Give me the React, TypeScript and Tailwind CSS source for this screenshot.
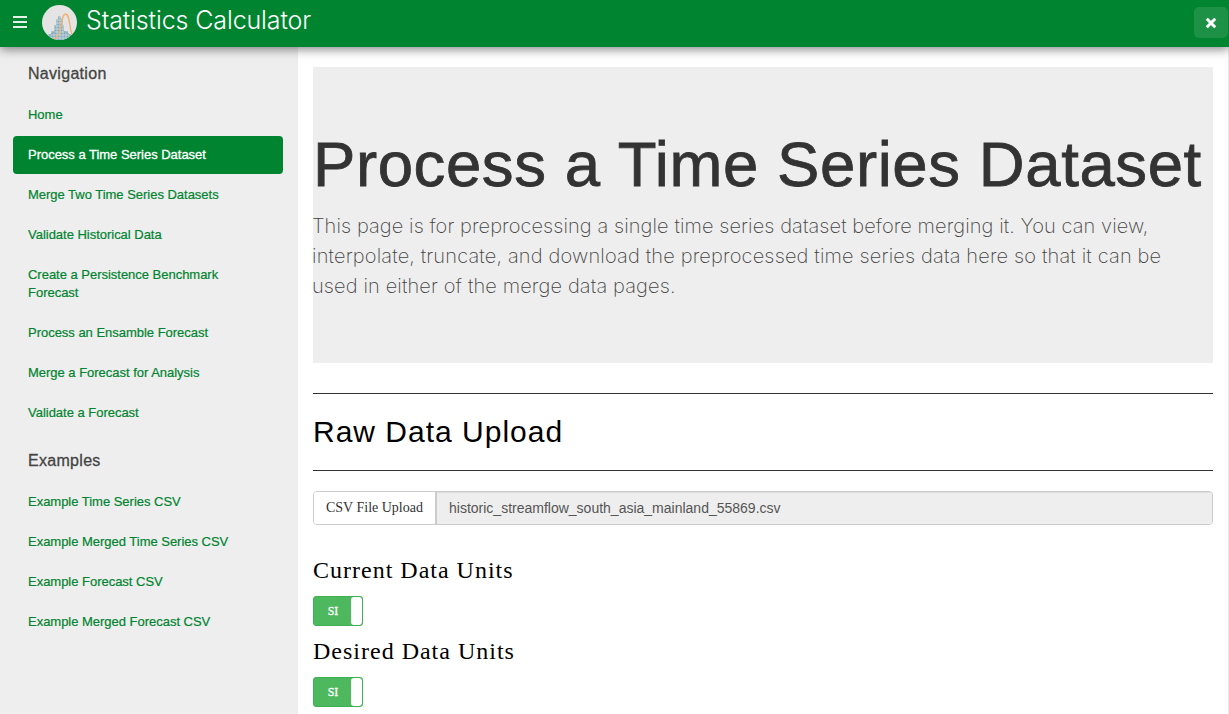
import React from "react";

type NavEntry = { label: string; active?: boolean };

const navigation: NavEntry[] = [
  { label: "Home" },
  { label: "Process a Time Series Dataset", active: true },
  { label: "Merge Two Time Series Datasets" },
  { label: "Validate Historical Data" },
  { label: "Create a Persistence Benchmark Forecast" },
  { label: "Process an Ensamble Forecast" },
  { label: "Merge a Forecast for Analysis" },
  { label: "Validate a Forecast" },
];

const examples: NavEntry[] = [
  { label: "Example Time Series CSV" },
  { label: "Example Merged Time Series CSV" },
  { label: "Example Forecast CSV" },
  { label: "Example Merged Forecast CSV" },
];

function Logo() {
  return (
    <svg viewBox="0 0 35 35" className="ml-[14px] mt-[5px] size-[35px] shrink-0">
      <defs>
        <clipPath id="disc">
          <circle cx="17.5" cy="17.5" r="17.5" />
        </clipPath>
        <pattern id="dots" width="3" height="3" patternUnits="userSpaceOnUse">
          <rect width="3" height="3" fill="#bccfd7" />
          <circle cx="1.5" cy="1.5" r="1.1" fill="#7faabd" />
        </pattern>
      </defs>
      <g clipPath="url(#disc)">
        <rect width="35" height="35" fill="#e3e4e3" />
        <path d="M6 35V29H9V26H12V20H14V14H16V11H19V14H21V20H22V26H26V29H29V35Z" fill="url(#dots)" />
        <path d="M5 33C9 30 10 27 13 27M22 27C26 27 28 31 31 33" fill="none" stroke="#7fa6b8" strokeWidth="1" />
        <path d="M10 34.500C21 34 18 9 23.500 9C28.500 9 27 25 30.500 30" fill="none" stroke="#f5b06c" strokeWidth="1.300" />
      </g>
    </svg>
  );
}

function NavGroup({ title, items }: { title: string; items: NavEntry[] }) {
  return (
    <section>
      <h2 className="mb-[2px] flex h-10 items-center px-[15px] text-[16px] tracking-[0.300px] text-[#444] [-webkit-text-stroke:0.3px_#444]">{title}</h2>
      <ul className="flex flex-col gap-[2px]">
        {items.map((item) => (
          <li key={item.label}>
            <a
              className={`block rounded-[4px] px-[15px] py-[10px] text-[13px] leading-[18px] tracking-[-0.020px] ${
                item.active
                  ? "bg-[#00842f] text-white [-webkit-text-stroke:0.3px_#fff]"
                  : "text-[#00842f] [-webkit-text-stroke:0.2px_#00842f]"
              }`}
            >
              {item.label}
            </a>
          </li>
        ))}
      </ul>
    </section>
  );
}

function UnitToggle() {
  return (
    <div className="flex h-[30px] w-[50px] overflow-hidden rounded-[3px] border border-[#3eaf52] bg-[#4eb85f]">
      <span className="flex-1 pl-[1px] text-center font-['Liberation_Serif',serif] text-[12px] leading-[28px] text-white [-webkit-text-stroke:0.3px_#fff]">SI</span>
      <span className="w-[11px] rounded-[3px] bg-white" />
    </div>
  );
}

export default function App() {
  return (
    <div className="flex h-[714px] w-full flex-col overflow-hidden bg-white font-['Liberation_Sans',Arial,sans-serif]">
      <header className="relative z-10 flex h-[47px] shrink-0 bg-[#00842f] shadow-[0_2px_10px_rgba(0,0,0,0.5)]">
        <button className="ml-[13px] mt-[16px] flex h-[12px] w-[15px] flex-col justify-between" aria-label="Menu">
          <span className="h-[2px] w-[14px] bg-[#e6f3ea]" />
          <span className="h-[2px] w-[14px] bg-[#e6f3ea]" />
          <span className="h-[2px] w-[14px] bg-[#e6f3ea]" />
        </button>
        <Logo />
        <h1 className="ml-[9px] whitespace-nowrap font-['Inter',sans-serif] text-[25px] font-light leading-[41px] tracking-[-0.120px] text-white">Statistics Calculator</h1>
        <button className="ml-auto mr-[1px] mt-[7px] flex h-[31px] w-[34px] items-center justify-center rounded-[5px] bg-[#1d9146]" aria-label="Close">
          <svg viewBox="0 0 10 10" className="size-[12px]">
            <path d="M1.500 1.500L8.500 8.500M8.500 1.500L1.500 8.500" stroke="#fff" strokeWidth="2.500" />
          </svg>
        </button>
      </header>
      <div className="flex min-h-0 flex-1">
        <nav className="flex w-[298px] shrink-0 flex-col gap-[9px] bg-[#eee] pl-[13px] pr-[15px] pt-[7px]">
          <NavGroup title="Navigation" items={navigation} />
          <NavGroup title="Examples" items={examples} />
        </nav>
        <main className="min-w-0 flex-1 border-r border-[#e7e7e7] pl-[15px] pr-[15px] pt-5">
          <section className="h-[296px] bg-[#eee] pt-[63px]">
            <h2 className="h-[69px] whitespace-nowrap text-[63.500px] leading-[69px] tracking-[0.590px] text-[#333] [-webkit-text-stroke:0.8px_#333]">Process a Time Series Dataset</h2>
            <p className="-ml-px mt-[12px] whitespace-nowrap font-['Inter',sans-serif] text-[20px] font-extralight leading-[30px] text-[#444]">
              <span className="tracking-[0.085px]">This page is for preprocessing a single time series dataset before merging it. You can view,</span>
              <br />
              <span className="tracking-[0.165px]">interpolate, truncate, and download the preprocessed time series data here so that it can be</span>
              <br />
              <span className="tracking-[0.135px]">used in either of the merge data pages.</span>
            </p>
          </section>
          <div className="mt-[30px] flex h-[78px] items-center border-y border-[#333] pb-[2px]">
            <h2 className="text-[30px] tracking-[1px] text-black">Raw Data Upload</h2>
          </div>
          <div className="mt-5 flex h-[34px] overflow-hidden rounded-[4px] border border-[#ccc]">
            <button className="w-[121px] shrink-0 bg-white pb-[2px] font-['Liberation_Serif',serif] text-[14px] text-[#333]">CSV File Upload</button>
            <div className="flex flex-1 items-center border-l-2 border-[#ccc] bg-[#eee] pl-[12px] text-[14px] text-[#555] shadow-[inset_0_1px_1px_rgba(0,0,0,0.075)]">historic_streamflow_south_asia_mainland_55869.csv</div>
          </div>
          <h3 className="mt-[32px] h-[26px] font-['Liberation_Serif',serif] text-[24px] leading-[26px] tracking-[1px] text-black">Current Data Units</h3>
          <div className="mt-[13px]"><UnitToggle /></div>
          <h3 className="mt-[12px] h-[26px] font-['Liberation_Serif',serif] text-[24px] leading-[26px] tracking-[1px] text-black">Desired Data Units</h3>
          <div className="mt-[13px]"><UnitToggle /></div>
        </main>
      </div>
    </div>
  );
}
